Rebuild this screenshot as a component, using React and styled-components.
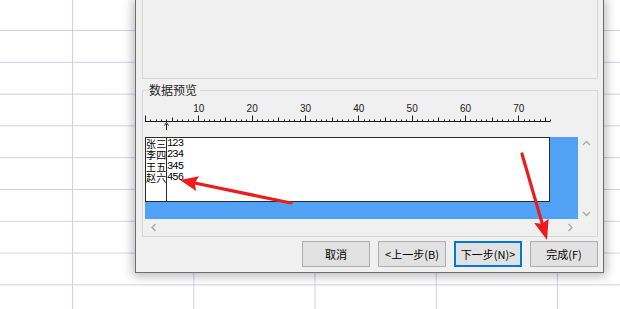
import React from "react";
import styled, { createGlobalStyle } from "styled-components";

const GlobalStyle = createGlobalStyle`
  html, body { margin: 0; padding: 0; background: #fff; }
  body { font-family: "Noto Sans CJK SC", "Liberation Sans", sans-serif; }
`;

const Page = styled.div`
  position: relative;
  width: 620px;
  height: 309px;
  overflow: hidden;
  box-sizing: border-box;
  padding-left: 135px;
  background-color: #fff;
  background-image:
    linear-gradient(to right, #cfcfe8 1px, transparent 1px),
    linear-gradient(to bottom, #cfcfe8 1px, transparent 1px);
  background-size: 121.25px 31.8px;
  background-position: 72px 30px;
`;

const Dialog = styled.div`
  width: 469px;
  box-sizing: border-box;
  background: #f0f0f0;
  border: 1px solid #6e6e6e;
  border-top: none;
  box-shadow: 0 1px 10px 2px rgba(0, 0, 0, 0.28);
  display: flex;
  flex-direction: column;
  padding: 0 5px 5px 6px;
`;

const UpperPanel = styled.div`
  height: 79px;
  box-sizing: border-box;
  border: 1px solid #d7d7d7;
  border-top: none;
`;

const GroupBox = styled.fieldset`
  margin: 4px 0 0;
  padding: 0 2px 0 2px;
  border: 1px solid #d7d7d7;
  min-width: 0;
`;

const Legend = styled.legend`
  font-family: "Noto Sans CJK SC", sans-serif;
  font-size: 12px;
  line-height: 14px;
  color: #1e1e1e;
  padding: 0 3px;
  margin-left: 1px;
`;

const RulerSvg = styled.svg`
  display: block;
  width: 450px;
  height: 40px;
`;

const ScrollArea = styled.div`
  display: grid;
  grid-template-columns: 433px 17px;
  grid-template-rows: 82px 17px;
`;

const Content = styled.div`
  background: #51a2f7;
  display: flex;
  align-items: flex-start;
`;

const Preview = styled.div`
  width: 405px;
  height: 65px;
  box-sizing: border-box;
  background: #fff;
  border: 1px solid #2a2a2a;
  display: flex;
`;

const Column = styled.div`
  width: ${(p) => p.$width};
  flex: ${(p) => (p.$grow ? 1 : "none")};
  border-right: ${(p) => (p.$divider ? "1px solid #2a2a2a" : "none")};
  display: flex;
  flex-direction: column;
`;

const NameCell = styled.div`
  font-family: "Noto Sans CJK SC", sans-serif;
  font-size: 10px;
  line-height: 11.3px;
  height: 11.3px;
  color: #000;
  white-space: nowrap;
  letter-spacing: 0.3px;
`;

const ValueCell = styled.div`
  font-family: "Liberation Mono", monospace;
  font-size: 10.5px;
  letter-spacing: -0.97px;
  line-height: 11.3px;
  height: 11.3px;
  color: #000;
  white-space: nowrap;
`;

const VScroll = styled.div`
  display: flex;
  flex-direction: column;
  justify-content: space-between;
  align-items: center;
  padding: 3px 0 2px;
`;

const HScroll = styled.div`
  display: flex;
  justify-content: space-between;
  align-items: center;
  padding: 0 4px 0 5px;
`;

const ButtonRow = styled.div`
  display: flex;
  justify-content: flex-end;
  gap: 8px;
  margin-top: 4px;
`;

const Button = styled.button`
  width: 68px;
  height: 26px;
  padding: 0;
  box-sizing: border-box;
  font-family: "Noto Sans CJK SC", sans-serif;
  font-size: 11px;
  color: #000;
  background: #e1e1e1;
  border: 1px solid ${(p) => (p.$focused ? "#0078d7" : "#adadad")};
  box-shadow: ${(p) => (p.$focused ? "inset 0 0 0 1px #0078d7" : "none")};
  border-radius: 0;
`;

const Overlay = styled.svg`
  position: absolute;
  left: 0;
  top: 0;
  width: 620px;
  height: 309px;
  pointer-events: none;
`;

const CharW = 5.333;

function Ruler() {
  const ticks = [];
  for (let n = 0; n <= 76; n++) {
    const x = Math.round(n * CharW) + 0.5;
    const h = n % 10 === 0 ? 6 : n % 5 === 0 ? 4 : 2;
    ticks.push(<line key={n} x1={x} x2={x} y1={24.5 - h} y2={24.5} stroke="#1a1a1a" strokeWidth="1" />);
  }
  const labels = [10, 20, 30, 40, 50, 60, 70];
  const mx = Math.round(4 * CharW) + 0.5;
  return (
    <RulerSvg viewBox="0 0 450 40">
      <line x1="0" x2="405" y1="24.5" y2="24.5" stroke="#1a1a1a" strokeWidth="1" />
      {ticks}
      {labels.map((l) => (
        <text
          key={l}
          x={l * CharW + 0.5}
          y="15"
          textAnchor="middle"
          fontFamily="Liberation Sans, sans-serif"
          fontSize="10"
          fill="#1a1a1a"
        >
          {l}
        </text>
      ))}
      <line x1={mx} x2={mx} y1="27" y2="33" stroke="#1a1a1a" strokeWidth="1" />
      <polyline points={`${mx - 2},28.5 ${mx},25.5 ${mx + 2},28.5`} fill="none" stroke="#1a1a1a" strokeWidth="1" />
    </RulerSvg>
  );
}

function Chevron({ dir }) {
  const pts = {
    up: "1,5 4.5,1.5 8,5",
    down: "1,2 4.5,5.5 8,2",
    left: "5.5,1 2,4.5 5.5,8",
    right: "2.5,1 6,4.5 2.5,8",
  }[dir];
  const vertical = dir === "up" || dir === "down";
  return (
    <svg width={vertical ? 9 : 8} height={vertical ? 7 : 9} viewBox={vertical ? "0 0 9 7" : "0 0 8 9"}>
      <polyline points={pts} fill="none" stroke="#a8a8a8" strokeWidth="1.3" />
    </svg>
  );
}

const rows = [
  ["张三", "123"],
  ["李四", "234"],
  ["王五", "345"],
  ["赵六", "456"],
];

function Arrow({ from, tip, len, half }) {
  const dx = tip[0] - from[0];
  const dy = tip[1] - from[1];
  const d = Math.hypot(dx, dy);
  const ux = dx / d;
  const uy = dy / d;
  const bx = tip[0] - ux * len;
  const by = tip[1] - uy * len;
  const px = -uy * half;
  const py = ux * half;
  const lx = tip[0] - ux * (len - 3);
  const ly = tip[1] - uy * (len - 3);
  return (
    <g>
      <line x1={from[0]} y1={from[1]} x2={lx} y2={ly} stroke="#ec1c1c" strokeWidth="3.2" strokeLinecap="round" />
      <polygon
        points={`${tip[0]},${tip[1]} ${bx + px},${by + py} ${bx + ux * 3},${by + uy * 3} ${bx - px},${by - py}`}
        fill="#ec1c1c"
      />
    </g>
  );
}

export default function App() {
  return (
    <>
      <GlobalStyle />
      <Page>
        <Dialog>
          <UpperPanel />
          <GroupBox>
            <Legend>数据预览</Legend>
            <Ruler />
            <ScrollArea>
              <Content>
                <Preview>
                  <Column $width="20px" $divider>
                    {rows.map(([n]) => (
                      <NameCell key={n}>{n}</NameCell>
                    ))}
                  </Column>
                  <Column $grow>
                    {rows.map(([n, v]) => (
                      <ValueCell key={n}>{v}</ValueCell>
                    ))}
                  </Column>
                </Preview>
              </Content>
              <VScroll>
                <Chevron dir="up" />
                <Chevron dir="down" />
              </VScroll>
              <HScroll>
                <Chevron dir="left" />
                <Chevron dir="right" />
              </HScroll>
              <div />
            </ScrollArea>
          </GroupBox>
          <ButtonRow>
            <Button>取消</Button>
            <Button>&lt;上一步(B)</Button>
            <Button $focused>下一步(N)&gt;</Button>
            <Button>完成(F)</Button>
          </ButtonRow>
        </Dialog>
        <Overlay viewBox="0 0 620 309">
          <Arrow from={[291, 203]} tip={[180, 180]} len={18} half={7.5} />
          <Arrow from={[522, 154]} tip={[547, 240]} len={20} half={7.5} />
        </Overlay>
      </Page>
    </>
  );
}
